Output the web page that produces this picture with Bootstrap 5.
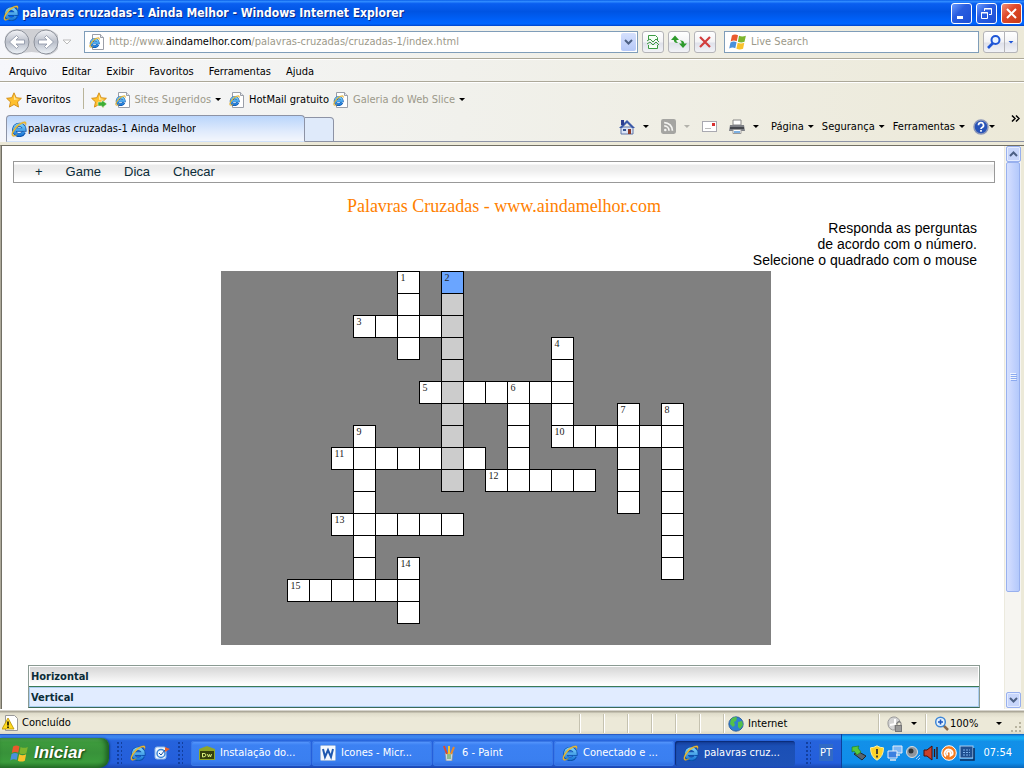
<!DOCTYPE html>
<html lang="pt-BR">
<head>
<meta charset="utf-8">
<meta name="viewport" content="width=device-width, initial-scale=1">
<title>palavras cruzadas-1 Ainda Melhor</title>
<link href="https://cdn.jsdelivr.net/npm/bootstrap@5.3.0/dist/css/bootstrap.min.css" rel="stylesheet">
<style>
body { font: 11px/16px "DejaVu Sans Condensed", "DejaVu Sans", sans-serif; color: #000; background: #ece9d8; cursor: default; }
a, a:hover { color: inherit; text-decoration: none; }
button { font: inherit; color: inherit; background: none; border: 0; padding: 0; }
svg { display: block; flex: none; }
.muted { color: #9c998a; }
.i16 { width: 16px; height: 16px; }
.caret { width: 6px; height: 3px; background: currentColor; clip-path: polygon(0 0, 100% 0, 50% 100%); flex: none; }

/* title bar */
.titlebar { height: 26px; padding: 0 2px 0 3px; gap: 3px; color: #fff; font-weight: bold; font-size: 12px; text-shadow: 1px 1px #0a2a8a;
  background: linear-gradient(#0a5fe8 0, #2f8bff 6%, #0a5ff0 14%, #0054e3 45%, #0062fb 80%, #0066ff 92%, #0043c8 100%); }
.winbtn { width: 21px; height: 21px; border: 1px solid #fff; border-radius: 3px; background: linear-gradient(135deg, #6b9bff, #2a5ee0 40%, #1c4fd6); display: grid; place-items: center; }
.winbtn.closer { background: linear-gradient(135deg, #f0907a, #e0492b 40%, #c63a16); }

/* tool bars */
.chrome-row { background: linear-gradient(100deg, #f6f7fb 0, #f1f1ec 45%, #ece9d8 100%); }
.navrow { height: 33px; padding: 0 6px 0 4px; border-bottom: 1px solid #aca899; }
.recent { margin: 0 12px 0 1px; }
.field { height: 22px; border: 1px solid #7f9db9; background: #fff; }
.field input { border: 0; outline: 0; padding: 0; min-width: 0; background: transparent; font: inherit; color: #9c998a; }
.searchbox { flex: 0 1 255px; }
.dropbtn { width: 15px; height: 18px; margin: 1px; border-radius: 2px; background: linear-gradient(#d5e0fd, #b5c8f8); display: grid; place-items: center; }
.sqbtn { width: 22px; height: 22px; border: 1px solid #b4b4b8; border-radius: 3px; background: linear-gradient(#fff, #f3f3f5 50%, #dfe1ea 55%, #f2f3f7); display: grid; place-items: center; }
.sqbtn.slim { width: 13px; color: #1e55d6; }
.menurow { height: 23px; padding: 2px 9px 0; gap: 15px; border-top: 1px solid #fff; border-bottom: 1px solid #aca899; }
.favrow { height: 32px; padding: 2px 6px 0; border-top: 1px solid #fff; }
.favrow .divider { align-self: stretch; width: 1px; margin: 3px 7px 5px 12px; background: #b9b49a; }
.tabrow { height: 28px; padding-left: 6px; }
.tabrow .filler { border-bottom: 1px solid #8d93a5; }
.tab-on { width: 299px; height: 27px; padding: 1px 4px 0; gap: 1px; border: 1px solid #8d93a5; border-bottom-color: #cfe1fb; border-radius: 4px 4px 0 0; background: linear-gradient(#b9d5fb, #dfeafc 60%, #f3f6fc); }
.tab-new { width: 29px; height: 25px; border: 1px solid #8d93a5; border-left: 0; border-radius: 0 4px 0 0; background: #dfeafa; }
.cmdbar { height: 32px; margin-top: -4px; padding: 2px 4px 0 0; }
.cmdbar .tool { display: flex; align-items: center; gap: 8px; margin-right: 12px; }

/* page area */
.viewport { border-left: 1px solid #aca899; border-top: 1px solid #716f64; margin-top: 3px; min-height: 0; }
.doc { border-left: 1px solid #716f64; background: #fff; min-width: 0; overflow: hidden; }
.doc-inner { padding: 15px 9px 0 11px; }
.gamemenu { height: 22px; border: 1px solid #999; padding: 0 25px 0 21px; gap: 23px; font: 13px/20px "Liberation Sans", Arial, sans-serif; color: #0b2c38;
  background: linear-gradient(#fff 0, #fff 2px, #ebebeb 3px, #ededed 8px, #fff 17px); }
.pagetitle { font: 18px/22px "Liberation Serif", "Times New Roman", serif; color: #ff7f00; margin: 12px 0 3px; }
.help { font: 14px/16px "Liberation Sans", Arial, sans-serif; margin: 0 18px 3px 0; }
.board-wrap { padding-right: 17px; }
.board { display: grid; grid-template: repeat(17, 22px) / repeat(25, 22px); background: #808080; width: max-content; margin: 0 auto; }
.sq { width: 23px; height: 23px; border: 1px solid #000; background: #fff; font: 10px/12px "Liberation Serif", "Times New Roman", serif; color: #222; padding: 0 0 0 3px; display: flex; align-items: flex-start; }
.sq.word { background: #ccc; }
.sq.current { background: #6aa5ff; }
.clues { margin: 20px 15px 0; border: 1px solid #8a9a92; border-bottom-color: #3b6a57; color: #0b2c38; line-height: 17px; }
.clues button { display: block; width: 100%; text-align: left; font-weight: bold; padding-left: 1px; height: 20px; border: 1px solid #fff; background: linear-gradient(#d6d6d6, #fff); }
.clues .split { border-top: 1px solid #3b7a57; }
.clues .open { border-color: #a9cdf0; background: #e1ecff; }

/* scroll bar */
.sbar { width: 17px; background: #f6f5f1; border-left: 1px solid #eceade; padding: 0 1px 1px; }
.sbar button { width: 15px; height: 16px; border: 1px solid #98b0ee; border-radius: 2px; background: #c8d6fb; display: grid; place-items: center; box-shadow: inset 0 0 0 1px #e4ecff; }
.thumb { flex: 0 0 76.5%; border: 1px solid #98b0ee; border-radius: 2px; background: linear-gradient(90deg, #d5e0ff, #c4d3fd 50%, #b3c9fb); display: grid; place-items: center; align-content: center; gap: 1px; }
.thumb i { width: 6px; height: 1px; background: #eef4fe; box-shadow: 1px 1px #8caaf0; }
.edge { width: 3px; background: #ece9d8; }

/* status bar */
.statusbar { height: 25px; padding: 2px 2px 0 2px; border-top: 1px solid #fff; background: linear-gradient(#fff 0, #aca899 1px, #aca899 2px, #dedbc9 3px, #ece9d8 8px, #ece9d8 85%, #dcd8c4); }
.cell { align-self: stretch; margin: 2px 0 1px; border-left: 1px solid #c5c2b0; box-shadow: inset 1px 0 #fff; }
.pane { width: 24px; }
.zone { flex: 0 1 155px; }
.privacy { flex: 0 1 43px; }
.zoombox { flex: 0 1 85px; }

/* task bar */
.taskbar { height: 34px; color: #fff; background: linear-gradient(#1c47b0 0, #3a80ea 4%, #3c87f0 10%, #2663dc 20%, #245edb 85%, #1b46b0); }
.start { width: 109px; margin-top: 4px; padding-left: 10px; gap: 5px; border-radius: 0 8px 10px 0; font: italic bold 17px/20px "Liberation Sans", Arial, sans-serif; text-shadow: 1px 1px 2px #163d0b;
  background: linear-gradient(#5bb35a 0, #3e9b3d 14%, #38923a 50%, #3b9c3c 80%, #2a7a2c); box-shadow: inset -3px 0 5px #1c5c22, 1px 0 2px #103a8c; }
.grip { width: 5px; height: 22px; margin-top: 3px; background: radial-gradient(circle at 1px 1px, #123f9f 1px, transparent 1px) 0 0/4px 4px; }
.tasks { gap: 1px; }
.task { flex: 0 1 120px; height: 25px; margin-top: 4px; padding: 0 8px; gap: 5px; border-radius: 3px; background: linear-gradient(#5c9bff 0, #3c81f3 16%, #3a7ff0 80%, #2f6bdd); box-shadow: inset 0 0 0 1px #3a78e6; white-space: nowrap; }
.task.active { background: linear-gradient(#123a94, #1b4fb5 20%, #1e52b7); box-shadow: inset 1px 1px 1px #0c2c78; }
.lang { background: #316ac5; padding: 0 1px; line-height: 17px; margin-top: 3px; }
.tray { width: 183px; padding: 4px 12px 0 9px; gap: 2px; border-left: 1px solid #0d3f9c; background: linear-gradient(#0c59b9 0, #16a0f0 6%, #18b4f5 12%, #1290e8 22%, #0f8dea 85%, #0a66b8); }
</style>
</head>
<body>
<svg width="0" height="0" class="position-absolute" aria-hidden="true">
  <defs>
    <linearGradient id="gBlue" gradientUnits="userSpaceOnUse" x1="0" y1="2" x2="0" y2="15"><stop offset="0" stop-color="#86dcff"/><stop offset="1" stop-color="#1673d6"/></linearGradient>
    <linearGradient id="gNav" x1="0" y1="0" x2="0" y2="1"><stop offset="0" stop-color="#f4f5f8"/><stop offset=".5" stop-color="#b9bec9"/><stop offset="1" stop-color="#eef3f8"/></linearGradient>
    <symbol id="ie" viewBox="0 0 16 16">
      <path d="M13 11.200A5.200 5.200 0 1 1 13.500 8.700H4" fill="none" stroke="#0a4fa6" stroke-width="4"/>
      <path d="M12.800 11A5.100 5.100 0 1 1 13.300 8.700H4.300" fill="none" stroke="url(#gBlue)" stroke-width="2.800"/>
      <path d="M1.200 14.800C-.9 12 5 3.500 10.500 1.400 13 .4 15.400.2 15.200 2.600 15.100 3.300 14.900 4 14.500 4.700 15 2.100 13.500 1.800 11.200 2.500 6 4.800 1.300 12 2 13.800 2.700 15 5 14.200 6.500 13.200 4.500 15.200 2.200 16.100 1.200 14.800Z" fill="#f6c232" stroke="#c08a18" stroke-width=".3"/>
    </symbol>
    <symbol id="iepage" viewBox="0 0 16 16">
      <path d="M3.500.5h8l3 3v12h-11z" fill="#fff" stroke="#9b9fa8"/><path d="M11.500.5v3h3" fill="#e6e8ee" stroke="#9b9fa8"/>
      <use href="#ie" x="0" y="3" width="11" height="11"/>
    </symbol>
    <symbol id="star" viewBox="0 0 16 16"><path d="M8 .8l2.200 4.900 5.200.6-3.900 3.600 1 5.200L8 12.500l-4.600 2.600 1.100-5.200L.6 6.300l5.200-.6z" fill="#ffc02e" stroke="#d08a12" stroke-width=".9"/><path d="M8 2.800l1.500 3.600 3.500.5L8 8z" fill="#ffe79a"/></symbol>
    <symbol id="flag" viewBox="0 0 16 16">
      <path d="M2.600 2.200C4.500 1 6.300 1.200 8 2.100L6.900 7.400C5.200 6.500 3.400 6.500 1.500 7.600z" fill="#ea5a2c"/>
      <path d="M8.900 2.500c1.800.9 3.800 1 6.100 0L13.800 7.700c-2.100 1-4 .9-5.900 0z" fill="#7db52e"/>
      <path d="M1.300 8.500c1.900-1.100 3.700-1.100 5.400-.2L5.600 13.500c-1.700-.9-3.500-.8-5.400.3z" fill="#4a90dc"/>
      <path d="M7.700 8.700c1.900.9 3.800 1 5.900 0L12.500 14c-2.100 1-4 .9-5.900 0z" fill="#f9c22c"/>
    </symbol>
    <symbol id="chev" viewBox="0 0 9 6"><path d="M1 1l3.500 3.500L8 1" fill="none" stroke="#4d6185" stroke-width="2"/></symbol>
  </defs>
</svg>

<div class="d-flex flex-column vh-100 overflow-hidden">
  <header class="titlebar d-flex align-items-center">
    <svg class="i16"><use href="#ie"/></svg>
    <div class="flex-grow-1 text-truncate">palavras cruzadas-1 Ainda Melhor - Windows Internet Explorer</div>
    <div class="d-flex gap-1">
      <button class="winbtn" aria-label="Minimizar"><svg width="13" height="13"><path d="M2 9h6v3H2z" fill="#fff"/></svg></button>
      <button class="winbtn" aria-label="Restaurar"><svg width="13" height="13" fill="none" stroke="#fff"><path d="M4.500 4V1.500h7v6H9M4 2h8M1.500 5.500h6v6h-6zM1 6h7"/></svg></button>
      <button class="winbtn closer" aria-label="Fechar"><svg width="13" height="13"><path d="M2 2l9 9M11 2l-9 9" stroke="#fff" stroke-width="2"/></svg></button>
    </div>
  </header>

  <div class="chrome-row navrow d-flex align-items-center">
    <svg width="57" height="28" viewBox="0 0 57 28" role="img" aria-label="Voltar e avançar">
      <path d="M13 1h30q6 1 11 6v14q-5 6-11 6-8-3-15.500-3T13 27Q5 27 1 19V9Q5 1 13 1z" fill="#cfd0d4"/>
      <circle cx="13" cy="14" r="12" fill="url(#gNav)" stroke="#8d929c"/><circle cx="42" cy="14" r="12" fill="url(#gNav)" stroke="#8d929c"/>
      <path d="M5.500 14l7-6.500 2 2-2.500 2.500h8.500v4H12l2.500 2.500-2 2z" fill="#fff" stroke="#8a93a5" stroke-width=".8"/>
      <path d="M49.500 14l-7-6.500-2 2 2.500 2.500h-8.500v4H43l-2.500 2.500 2 2z" fill="#fff" stroke="#8a93a5" stroke-width=".8"/>
    </svg>
    <svg width="10" height="6" class="recent"><path d="M1 1h8L5 5z" fill="#fff" stroke="#bbb"/></svg>
    <div class="field d-flex align-items-center flex-grow-1 me-1">
      <svg class="i16 ms-1"><use href="#iepage"/></svg>
      <a href="#" class="muted flex-grow-1 ps-1 text-truncate">http://www.<span class="text-black">aindamelhor.com</span>/palavras-cruzadas/cruzadas-1/index.html</a>
      <button class="dropbtn" aria-label="Endereços"><svg width="9" height="6"><use href="#chev"/></svg></button>
    </div>
    <div class="d-flex gap-1 me-2">
      <button class="sqbtn" aria-label="Compatibilidade"><svg class="i16"><path d="M3.500 6V1.500h7l2 2V6M3.500 11v3.500h9V11" fill="#f4fff4" stroke="#3b9b42"/><path d="M2 7l3-2 3 3 3-3 3 3M2 10l3-2 3 3 3-3 3 3" fill="none" stroke="#3b9b42"/></svg></button>
      <button class="sqbtn" aria-label="Atualizar"><svg class="i16" fill="#2e9a2b"><path d="M0 6l4-4.500L8 6H5.300q0 2.500 2 3-4.300.5-4.500-3z"/><path d="M16 9.500l-4 4.500-4-4.500h2.700q0-2.500-2-3 4.300-.5 4.500 3z"/></svg></button>
      <button class="sqbtn" aria-label="Parar"><svg class="i16"><path d="M3 3l10 10M13 3L3 13" stroke="#d23c3c" stroke-width="2.200"/></svg></button>
    </div>
    <div class="field searchbox d-flex align-items-center gap-1 me-1">
      <svg width="18" height="18" class="ms-1"><use href="#flag"/></svg>
      <input class="flex-grow-1" type="text" value="Live Search" aria-label="Pesquisar">
    </div>
    <div class="d-flex">
      <button class="sqbtn rounded-end-0" aria-label="Buscar"><svg class="i16"><path d="M2 14l5-5" stroke="#1e55d6" stroke-width="2.600"/><circle cx="9.500" cy="6" r="4" fill="#eaf4ff" stroke="#1e55d6" stroke-width="2"/></svg></button>
      <button class="sqbtn slim rounded-start-0 border-start-0" aria-label="Opções"><span class="caret"></span></button>
    </div>
  </div>

  <nav class="chrome-row menurow d-flex align-items-center" aria-label="Menu">
    <a href="#">Arquivo</a><a href="#">Editar</a><a href="#">Exibir</a><a href="#">Favoritos</a><a href="#">Ferramentas</a><a href="#">Ajuda</a>
  </nav>

  <div class="chrome-row favrow d-flex align-items-center">
    <button class="d-flex gap-1"><svg class="i16"><use href="#star"/></svg>Favoritos</button>
    <span class="divider"></span>
    <button class="me-2" aria-label="Adicionar"><svg class="i16"><use href="#star"/><path d="M7 10h4V8l5 4-5 4v-2H7z" fill="#3fae35" stroke="#fff" stroke-width=".5"/></svg></button>
    <a href="#" class="d-flex align-items-center muted gap-1 me-2"><svg class="i16"><use href="#iepage"/></svg>Sites Sugeridos <i class="caret text-black"></i></a>
    <a href="#" class="d-flex align-items-center gap-1 me-1"><svg class="i16"><use href="#iepage"/></svg>HotMail gratuito</a>
    <a href="#" class="d-flex align-items-center muted gap-1"><svg class="i16"><use href="#iepage"/></svg>Galeria do Web Slice <i class="caret text-black"></i></a>
  </div>

  <div class="chrome-row tabrow d-flex align-items-end">
    <div class="tab-on d-flex align-items-center"><svg class="i16"><use href="#ie"/></svg><span class="text-truncate">palavras cruzadas-1 Ainda Melhor</span></div>
    <button class="tab-new" aria-label="Nova guia"></button>
    <div class="cmdbar filler flex-grow-1 d-flex align-items-center justify-content-end">
      <a href="#" class="tool" aria-label="Página inicial"><svg class="i16"><path d="M2 8h12v7H2z" fill="#dbe4f6" stroke="#6076a8"/><path d="M8 1L0 9h3l5-5 5 5h3z" fill="#3c5aa8"/><path d="M2 1h3v5H2z" fill="#2d3f91"/><path d="M9 10h3v5H9z" fill="#8c3b2a"/><path d="M4 10h3v2H4z" fill="#33528f"/></svg><i class="caret"></i></a>
      <a href="#" class="tool" aria-label="Feeds"><svg width="15" height="15" viewBox="0 0 14 14"><rect width="14" height="14" rx="2" fill="#a5a5a2"/><g fill="none" stroke="#f5f5f2" stroke-width="1.600"><path d="M3 6.500A4.500 4.500 0 0 1 7.500 11M3 3.300A7.700 7.700 0 0 1 10.700 11"/></g><circle cx="4" cy="10.200" r="1.200" fill="#f5f5f2"/></svg><i class="caret opacity-25"></i></a>
      <a href="#" class="tool" aria-label="Email"><svg width="15" height="11"><rect x=".5" y=".5" width="14" height="10" fill="#fff" stroke="#a9a9b0"/><path d="M10 2h3v3h-3z" fill="#d8302f"/><path d="M3 7.500h6" stroke="#bbb"/></svg></a>
      <a href="#" class="tool" aria-label="Imprimir"><svg class="i16"><path d="M4 1h8v5H4z" fill="#fff" stroke="#888"/><path d="M1 6h14l1 6H0z" fill="#7e8086"/><path d="M1 8h14v2H1z" fill="#44464c"/><path d="M4 10.500h8v4H4z" fill="#fff" stroke="#999"/><path d="M5 12h6v2H5z" fill="#7db0e0"/></svg><i class="caret"></i></a>
      <a href="#" class="d-flex align-items-center">Página <i class="caret ms-1"></i></a>
      <a href="#" class="d-flex align-items-center ms-2">Segurança <i class="caret ms-1"></i></a>
      <a href="#" class="d-flex align-items-center ms-2">Ferramentas <i class="caret ms-1"></i></a>
      <a href="#" class="d-flex align-items-center ms-2" aria-label="Ajuda"><svg class="i16"><circle cx="8" cy="8" r="7" fill="#2753b8" stroke="#8b96b8" stroke-width="1.500"/><path d="M5.500 6.200a2.500 2.500 0 1 1 3.600 2.200q-1.100.6-1.100 1.500M8 11v1.800" fill="none" stroke="#fff" stroke-width="1.700"/></svg><i class="caret"></i></a>
      <svg width="9" height="7" class="ms-3 mb-3"><path d="M1 .5l3 3-3 3M5 .5l3 3-3 3" fill="none" stroke="#000" stroke-width="1.500"/></svg>
    </div>
  </div>

  <div class="viewport d-flex flex-grow-1">
    <main class="doc flex-grow-1">
      <div class="doc-inner">
        <nav class="gamemenu d-flex" aria-label="Jogo"><a href="#">+</a><a href="#">Game</a><a href="#">Dica</a><a href="#">Checar</a></nav>
        <h1 class="pagetitle text-center">Palavras Cruzadas - www.aindamelhor.com</h1>
        <p class="help text-end">Responda as perguntas<br>de acordo com o número.<br>Selecione o quadrado com o mouse</p>
        <div class="board-wrap"><div class="board" id="board"></div></div>
        <div class="clues"><button>Horizontal</button><div class="split"><button class="open">Vertical</button></div></div>
      </div>
    </main>
    <div class="sbar d-flex flex-column">
      <button aria-label="Subir"><svg width="9" height="6"><path d="M1 5l3.500-3.500L8 5" fill="none" stroke="#4d6185" stroke-width="2"/></svg></button>
      <div class="thumb"><i></i><i></i><i></i><i></i></div>
      <button class="mt-auto" aria-label="Descer"><svg width="9" height="6"><use href="#chev"/></svg></button>
    </div>
    <div class="edge"></div>
  </div>

  <div class="statusbar d-flex align-items-center">
    <svg class="i16"><path d="M3.500.5h9l3 3v12h-12z" fill="#fff" stroke="#999"/><path d="M6 3l6 11H0z" fill="#ffd91e" stroke="#b58f00" stroke-width=".8"/><path d="M6 6.500v4M6 11.500v1.500" stroke="#000" stroke-width="1.500"/></svg>
    <span class="flex-grow-1 ps-1">Concluído</span>
    <span class="cell pane"></span><span class="cell pane"></span><span class="cell pane"></span><span class="cell pane"></span><span class="cell pane"></span><span class="cell pane"></span>
    <span class="cell zone d-flex align-items-center gap-1 ps-1"><svg class="i16"><circle cx="8" cy="8" r="7.200" fill="#2f7fd0" stroke="#1c4f94" stroke-width=".8"/><path d="M3 3q4-3 6-1.500L8 5 6 6l1 3-2 2-3-3zM10 6l4-1 1 4-3 4-2-2z" fill="#55c04a"/></svg>Internet</span>
    <span class="cell privacy d-flex align-items-center ps-2"><svg class="i16 me-1"><path d="M1 8a6 6 0 0 1 12-2L8 8v6a6 6 0 0 1-7-6z" fill="#d4d4d4" stroke="#999"/><path d="M8 3v5L3 9" fill="none" stroke="#fff" stroke-width="2"/><rect x="8.500" y="9.500" width="6" height="6" fill="#999" stroke="#777"/><path d="M10 9V7.500a2 2 0 0 1 4 0V9" fill="none" stroke="#777"/></svg><i class="caret ms-1"></i></span>
    <span class="cell zoombox d-flex align-items-center ps-2 pe-2 ms-1"><svg class="i16"><path d="M9 9l5 5" stroke="#8a6a4a" stroke-width="2.500"/><circle cx="6.500" cy="6" r="4.800" fill="#e4f3ff" stroke="#3f86d6" stroke-width="1.500"/><path d="M4 6h5M6.500 3.500v5" stroke="#1e57c0" stroke-width="1.600"/></svg><span class="flex-grow-1">100%</span><i class="caret"></i></span>
    <svg width="12" height="12" class="mt-2"><path d="M9 1h2v2H9zM5 5h2v2H5zM9 5h2v2H9zM1 9h2v2H1zM5 9h2v2H5zM9 9h2v2H9z" fill="#b8b4a0"/></svg>
  </div>

  <footer class="taskbar d-flex align-items-center">
    <button class="start d-flex align-items-center align-self-stretch"><svg width="19" height="19"><use href="#flag"/></svg>Iniciar</button>
    <span class="grip mx-2"></span>
    <a href="#" class="mt-1" aria-label="Internet Explorer"><svg class="i16"><use href="#ie"/></svg></a>
    <a href="#" class="mt-1 ms-2" aria-label="Outlook Express"><svg class="i16"><rect x="1" y="2" width="11" height="12" rx="2" fill="#eef6ff" stroke="#8fb8e8"/><circle cx="7" cy="8.500" r="4" fill="none" stroke="#3b86d8" stroke-width="1.500"/><path d="M5 8l2 2 4-5" fill="none" stroke="#1c4f9c"/><path d="M11 2l5 2-5 3z" fill="#e8622c"/></svg></a>
    <span class="grip ms-2 me-1"></span>
    <div class="tasks d-flex flex-grow-1 ps-1">
      <a href="#" class="task d-flex align-items-center"><svg class="i16"><path d="M0 4l8-3 8 3v11H0z" fill="#8fa62a"/><path d="M1 6h14v8H1z" fill="#34400c"/><path d="M3.500 8v4M3.500 8.500Q7 8 7 10T3.500 12M8.500 9l1 3 1-2.500 1 2.500 1-3" fill="none" stroke="#d8ef7a"/></svg>Instalação do...</a>
      <a href="#" class="task d-flex align-items-center"><svg class="i16"><rect x=".5" y=".5" width="15" height="15" rx="1" fill="#f4f8fe" stroke="#9ab7e0"/><path d="M3 4l2 8L8 5l3 7 2-8" fill="none" stroke="#1f58b0" stroke-width="2"/></svg>Icones - Micr...</a>
      <a href="#" class="task d-flex align-items-center"><svg class="i16"><path d="M4 8h8l-1 8H5z" fill="#cfd8e0" stroke="#7a8899" stroke-width=".7"/><path d="M6 9L3 1" stroke="#e04a2a" stroke-width="2"/><path d="M8 9V1" stroke="#f2c12c" stroke-width="2"/><path d="M10 9l3-7" stroke="#e88a2c" stroke-width="2"/><path d="M7 14V9M9 14V9" stroke="#4a9d3c"/></svg>6 - Paint</a>
      <a href="#" class="task d-flex align-items-center"><svg class="i16"><use href="#ie"/></svg>Conectado e ...</a>
      <a href="#" class="task active d-flex align-items-center"><svg class="i16"><use href="#ie"/></svg>palavras cruz...</a>
    </div>
    <span class="grip me-2"></span><span class="lang me-2">PT</span>
    <div class="tray d-flex align-items-center align-self-stretch">
      <svg class="i16"><path d="M3 9l8 6 4-4-7-4z" fill="#5a6570" stroke="#20262c"/><path d="M1 2l7-1-1 2 3 4-4 3-3-4-2 1z" fill="#56c83c" stroke="#1f7a17" stroke-width=".6"/></svg>
      <svg class="i16"><path d="M8 .8q3 2 6.500 2 0 9-6.500 12.400Q1.500 11.800 1.500 2.800 5 2.800 8 .8z" fill="#ffd428" stroke="#fff0a0"/><path d="M8 4v5M8 10.500v2" stroke="#333" stroke-width="1.800"/></svg>
      <svg class="i16"><path d="M6 1h9v7H6z" fill="#7db7f5" stroke="#e6eef8"/><path d="M1 6h9v7H1z" fill="#3b7fe0" stroke="#e6eef8"/><path d="M3 15h6M9 10h4" stroke="#dfe6f0" stroke-width="1.500"/></svg>
      <svg class="i16"><circle cx="7" cy="7" r="5.500" fill="#8e969e" stroke="#d8dde2"/><circle cx="6" cy="6" r="2.500" fill="#30363c"/><path d="M11 14l4-4M13 15l2-2" stroke="#a8cdf5"/></svg>
      <svg class="i16"><path d="M1 5h3l5-4v14l-5-4H1z" fill="#c8402a" stroke="#4d0d06"/><path d="M11.500 4v8M14 2v12" stroke="#401008" stroke-width="1.300"/></svg>
      <svg class="i16"><circle cx="8" cy="8" r="7.300" fill="#f47b20" stroke="#fff"/><path d="M5 11.500A4 4 0 1 1 11.500 9.500l-2 1.200V8A1.800 1.800 0 1 0 7 9.800" fill="none" stroke="#fff" stroke-width="1.800"/></svg>
      <svg class="i16"><rect x="1" y="1" width="13" height="12" fill="#1f4f90" stroke="#a9cdf0"/><path d="M1 15h14V3" fill="none" stroke="#0c2d5c" stroke-width="1.500"/><path d="M4 5h7M4 7.500h7M4 10h7" stroke="#7fb4ee" stroke-dasharray="2 1"/></svg>
      <span class="ms-auto">07:54</span>
    </div>
  </footer>
</div>

<script>
// Each word: clue number shown in its first square, row, column, length, direction.
const words = [
  [1, 0, 8, 4, 'v'], [2, 0, 10, 10, 'v'], [3, 2, 6, 5, 'h'], [4, 3, 15, 5, 'v'], [5, 5, 9, 7, 'h'],
  [6, 5, 13, 5, 'v'], [7, 6, 18, 5, 'v'], [8, 6, 20, 8, 'v'], [9, 7, 6, 8, 'v'], [10, 7, 15, 6, 'h'],
  [11, 8, 5, 7, 'h'], [12, 9, 12, 5, 'h'], [13, 11, 5, 6, 'h'], [14, 13, 8, 3, 'v'], [15, 14, 3, 6, 'h']
];
const squares = new Map();
for (const [num, row, col, len, dir] of words) {
  for (let i = 0; i < len; i++) {
    const r = row + (dir === 'v' ? i : 0), c = col + (dir === 'h' ? i : 0), key = r + ',' + c;
    const s = squares.get(key) || { r, c, label: '', cls: '' };
    if (i === 0) s.label = num;
    if (num === 2) s.cls = i === 0 ? 'current' : 'word';
    squares.set(key, s);
  }
}
for (const s of [...squares.values()].sort((a, b) => a.r - b.r || a.c - b.c)) {
  const b = document.createElement('button');
  b.className = 'sq ' + s.cls;
  b.style.gridArea = (s.r + 1) + ' / ' + (s.c + 1);
  b.textContent = s.label;
  b.setAttribute('aria-label', 'Linha ' + (s.r + 1) + ', coluna ' + (s.c + 1));
  document.getElementById('board').append(b);
}
</script>
<script src="https://cdn.jsdelivr.net/npm/bootstrap@5.3.0/dist/js/bootstrap.bundle.min.js"></script>
</body>
</html>
